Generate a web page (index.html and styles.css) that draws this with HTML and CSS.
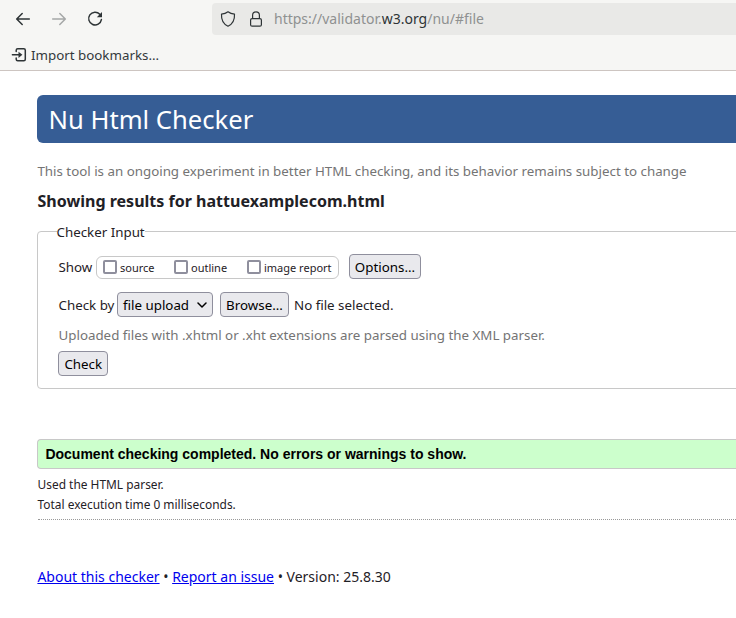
FILE: index.html
```html
<!DOCTYPE html>
<html lang="en">
<head>
<meta charset="utf-8">
<title>Nu Html Checker</title>
<link rel="stylesheet" href="styles.css">
</head>
<body>
<header class="browser">
  <div class="toolbar">
    <nav class="nav">
      <svg width="16" height="16" viewBox="0 0 16 16" class="icon"><path d="M14.3 8H1.8M7.2 2.5 1.7 8l5.5 5.5"/></svg>
      <svg width="16" height="16" viewBox="0 0 16 16" class="icon disabled"><path d="M1.7 8h12.5M8.8 2.5 14.3 8l-5.5 5.5"/></svg>
      <svg width="16" height="16" viewBox="0 0 16 16" class="icon"><path d="M12.8 3.2A6.4 6.4 0 1 0 14.4 8.6"/><path class="solid" d="M15 1v5.2H9.8z"/></svg>
    </nav>
    <div class="urlbar">
      <svg width="16" height="16" viewBox="0 0 16 16" class="icon thin"><path d="M8 .8c2 1.500 4.100 2.100 6.500 2.300.3 5.300-1.300 9.700-6.500 12.100C2.800 12.800 1.200 8.400 1.500 3.100 3.900 2.900 6 2.300 8 .8z"/></svg>
      <svg width="16" height="16" viewBox="0 0 16 16" class="icon thin"><rect x="2.600" y="7.600" width="10.800" height="7.600" rx="1.500"/><path d="M4.600 7.500V4.300a3.400 3.400 0 0 1 6.800 0v3.200"/></svg>
      <span class="url">https://validator.<b>w3.org</b>/nu/#file</span>
    </div>
  </div>
  <div class="bookmarks">
    <svg width="16" height="16" viewBox="0 0 16 16" class="icon"><path d="M5.200 4.500V3.300a1.500 1.500 0 0 1 1.500-1.500h6.100a1.500 1.500 0 0 1 1.500 1.500v8.900a1.500 1.500 0 0 1-1.500 1.500H6.700a1.500 1.500 0 0 1-1.500-1.500v-1.200M1.400 7.800h8"/><path class="solid" d="M7.500 4.700 11.400 7.800 7.500 10.900z"/></svg>
    <span class="import">Import bookmarks...</span>
  </div>
</header>
<main class="page">
  <h1 class="banner"><span>Nu Html Checker</span></h1>
  <p class="intro"><span>This tool is an ongoing experiment in better HTML checking, and its behavior remains subject to change</span></p>
  <h2 class="heading"><span>Showing results for hattuexamplecom.html</span></h2>
  <fieldset class="input">
    <legend>Checker Input</legend>
    <div class="row show">
      <span class="label">Show</span>
      <div class="checks">
        <label><i class="box"></i>source</label>
        <label><i class="box"></i>outline</label>
        <label><i class="box"></i>image report</label>
      </div>
      <button class="btn options">Options...</button>
    </div>
    <div class="row upload">
      <span class="label">Check by</span>
      <button class="btn select">file upload<svg width="10" height="6" viewBox="0 0 10 6"><path d="M1 1l4 4 4-4"/></svg></button>
      <button class="btn browse">Browse...</button>
      <span>No file selected.</span>
    </div>
    <p class="hint"><span>Uploaded files with .xhtml or .xht extensions are parsed using the XML parser.</span></p>
    <button class="btn check">Check</button>
  </fieldset>
  <p class="success"><span>Document checking completed. No errors or warnings to show.</span></p>
  <div class="details">
    <p><span>Used the HTML parser.</span></p>
    <p><span>Total execution time 0 milliseconds.</span></p>
  </div>
  <p class="footer"><a href="#">About this checker</a> • <a href="#">Report an issue</a> • <span>Version: 25.8.30</span></p>
</main>
</body>
</html>
```
FILE: styles.css
```css
* { box-sizing: border-box; }
body {
  margin: 0;
  overflow: hidden;
  background: #fff;
  color: #1f2126;
  font: 13.333px/20px "Noto Sans", sans-serif;
  white-space: nowrap;
}
p, h1, h2 { margin: 0; }

.browser { height: 71px; background: #f6f6f4; border-bottom: 1px solid #cdc5c1; color: #33393c; }
.toolbar { display: flex; height: 38px; padding: 3px 0 0 15px; }
.nav { display: flex; gap: 20px; width: 197px; height: 32px; align-items: center; }
.icon { flex: none; fill: none; stroke: #2e3436; stroke-width: 1.5; stroke-linecap: round; stroke-linejoin: round; }
.icon .solid { fill: #2e3436; stroke: none; }
.thin { stroke-width: 1.2; }
.disabled { opacity: .4; }
.urlbar { flex: 1; display: flex; align-items: center; height: 32px; padding-left: 8px; gap: 12px; background: #e9e9e7; border-radius: 4px 0 0 4px; }
.url { font-size: 14px; color: #8f9191; margin-left: -2px; }
.url b { font-weight: 400; color: #2e3436; }
.bookmarks { display: flex; align-items: center; gap: 4px; height: 34px; padding-left: 11px; }

.page { padding: 24px 0 0 37px; }
.banner { height: 48px; padding-left: 11.5px; background: #365d95; color: #fff; border-radius: 6px 0 0 6px; font-size: 25.6px; font-weight: 400; line-height: 49px; }
.intro { margin-top: 18px; padding-left: .4px; color: #747474; }
.heading { margin-top: 10px; padding-left: .5px; font-size: 16.05px; line-height: 20px; }
.input { height: 167px; margin: 11px -8px 0 0; padding: 13px 0 0 20px; border: 1px solid #c8c8c8; border-radius: 4px; min-width: 0; }
.input legend { margin-left: -1.5px; padding: 0; height: 19px; }
.row { display: flex; align-items: center; height: 26px; }
.row .btn { margin-top: -2px; }
.label { width: 38px; padding-left: .5px; }
.checks { display: flex; align-items: center; width: 243px; height: 23px; padding-left: 6px; border: 1px solid #c8c8c8; border-radius: 6px; font-size: 11px; }
.checks label { display: flex; align-items: center; gap: 3px; padding-top: 2px; }
.checks label:nth-child(1) { width: 71px; }
.checks label:nth-child(2) { width: 73px; }
.box { width: 14px; height: 14px; margin-top: -2px; border: 2px solid #8f8f9d; border-radius: 2px; background: #fff; }
.btn { height: 25px; padding: 2px 0 0; border: 1px solid #8f8f9d; border-radius: 4px; background: #e9e9ed; color: #000; font: inherit; line-height: 20px; }
.options { width: 72px; margin-left: 10px; }
.upload { margin-top: 12px; }
.upload .label { width: 59px; }
.select { display: flex; align-items: center; justify-content: space-between; width: 96px; padding: 2px 5px 0; }
.select svg { fill: none; stroke: #000; stroke-width: 1.5; stroke-linecap: round; stroke-linejoin: round; }
.browse { width: 69px; margin: 0 5px 0 7px; }
.hint { margin-top: 7px; padding-left: .5px; color: #747474; }
.check { display: block; width: 50px; margin-top: 6px; padding: 1px 0 0 .6px; }
.success { height: 30px; margin-top: 50px; padding-left: 7.4px; background: #cfc; border: 1px solid #c8c8c8; border-right: 0; border-radius: 4px 0 0 4px; color: #000; font: bold 14px/28px "Liberation Sans", sans-serif; }
.details { margin-left: .5px; padding: 5px 0 5px; border-bottom: 1px dotted #999; font-size: 11.93px; }
.footer { margin-top: 47px; padding-left: .4px; font-size: 14px; }
.footer a { color: #00e; }
```
